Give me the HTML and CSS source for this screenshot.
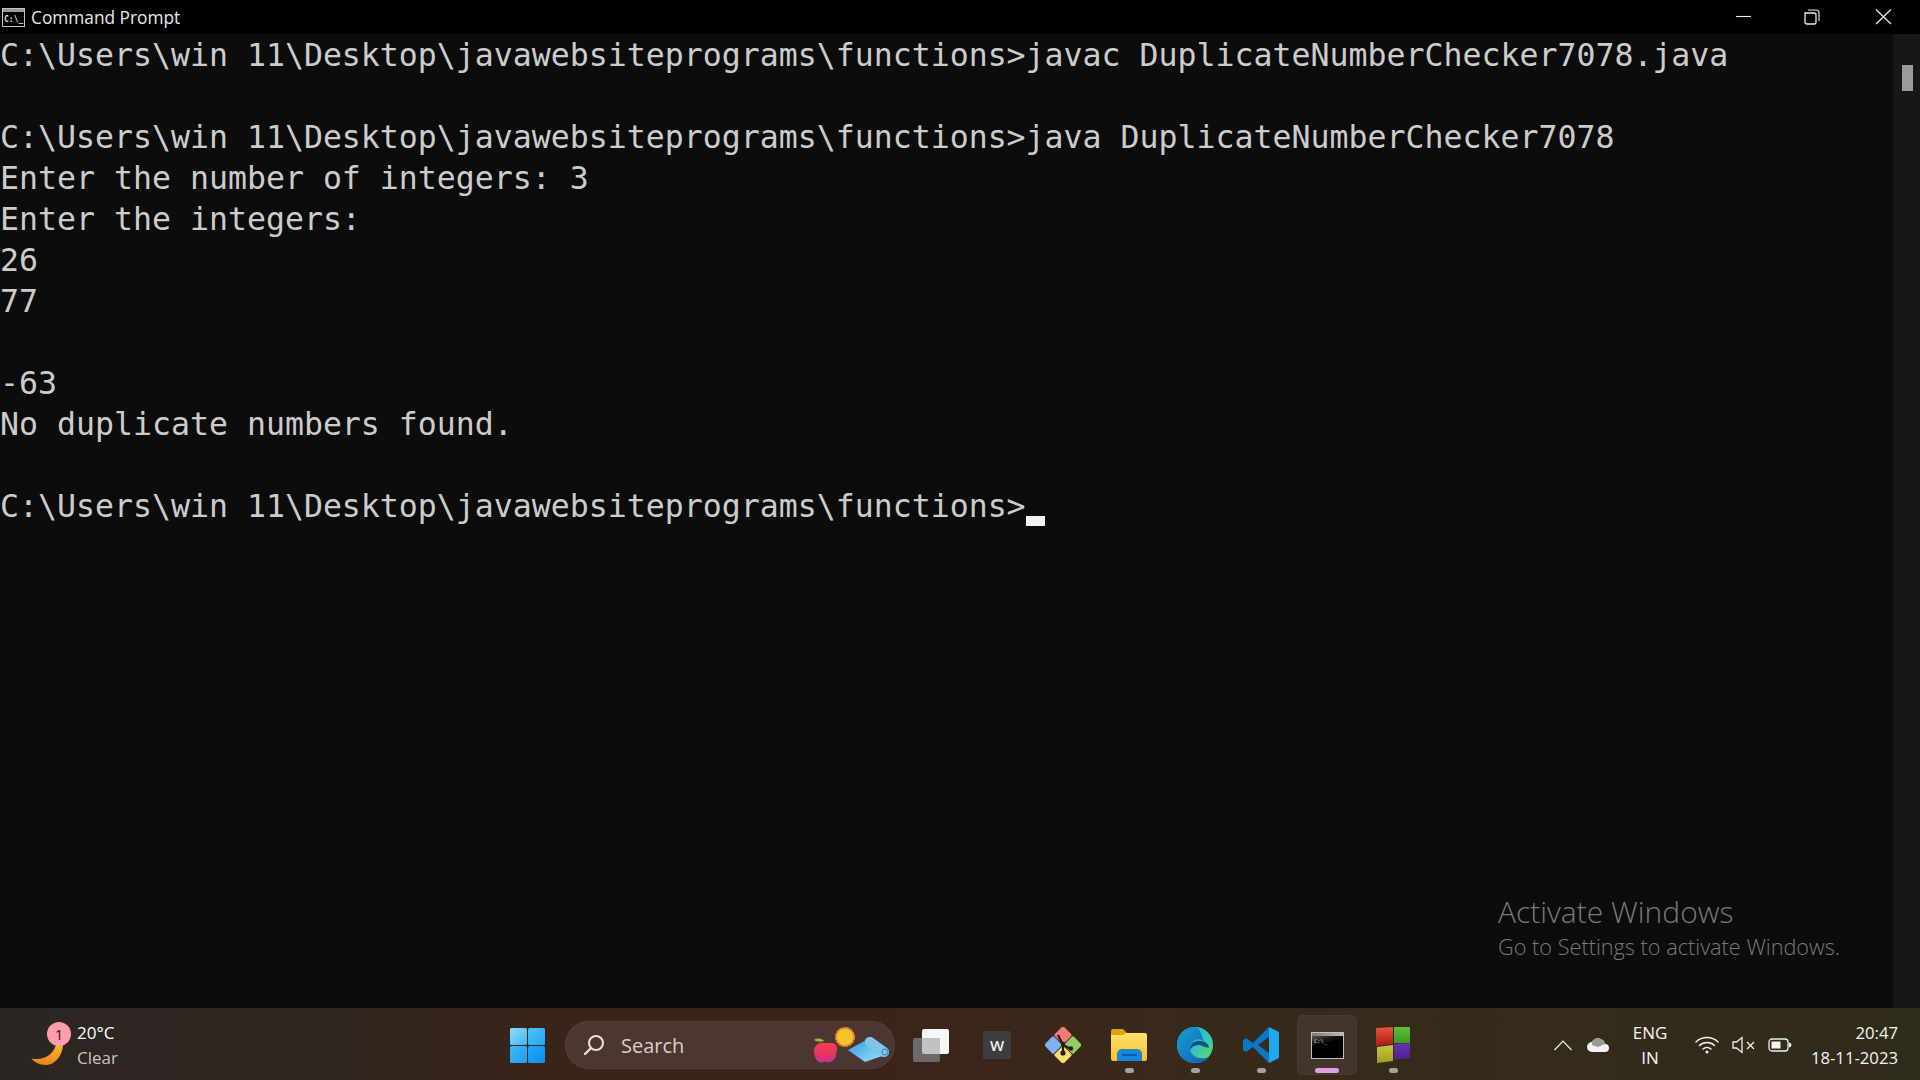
FILE: index.html
```html
<!DOCTYPE html>
<html lang="en">
<head>
<meta charset="utf-8">
<title>Command Prompt</title>
<link rel="stylesheet" href="styles.css">
</head>
<body>
<div class="screen">
  <header class="titlebar">
    <div class="title">
      <svg class="cmd-mini" viewBox="0 0 23 19"><rect x=".5" y=".5" width="22" height="18" fill="#000" stroke="#c4c4c4"/><rect x="1" y="1" width="21" height="3" fill="#9a9a9a"/><text x="2" y="14" class="cmd-mini-text">C:\_</text></svg>
      <span>Command Prompt</span>
    </div>
    <div class="winctl">
      <svg viewBox="0 0 70 34"><path d="M26 16.500h15" stroke="#eee" stroke-width="1.100" fill="none"/></svg>
      <svg viewBox="0 0 70 34"><path d="M25 13h9a2 2 0 0 1 2 2v7a2 2 0 0 1-2 2h-7a2 2 0 0 1-2-2z" stroke="#eee" stroke-width="1.300" fill="none"/><path d="M28 10h8a3 3 0 0 1 3 3v8" stroke="#eee" stroke-width="1.100" fill="none"/></svg>
      <svg viewBox="0 0 70 34"><path d="M26 9.500l15 14.500M41 9.500l-15 14.500" stroke="#eee" stroke-width="1.200" fill="none"/></svg>
    </div>
  </header>

  <main class="console">
    <pre class="output">C:\Users\win 11\Desktop\javawebsiteprograms\functions&gt;javac DuplicateNumberChecker7078.java

C:\Users\win 11\Desktop\javawebsiteprograms\functions&gt;java DuplicateNumberChecker7078
Enter the number of integers: 3
Enter the integers:
26
77

-63
No duplicate numbers found.

C:\Users\win 11\Desktop\javawebsiteprograms\functions&gt;<span class="cursor"></span></pre>
    <aside class="scrollbar"><div class="thumb"></div></aside>
    <div class="watermark">
      <div class="wm-title">Activate Windows</div>
      <div class="wm-sub">Go to Settings to activate Windows.</div>
    </div>
  </main>

  <footer class="taskbar">
    <div class="weather">
      <div class="weather-icon">
        <svg viewBox="0 0 36 44" width="36" height="44">
          <defs><linearGradient id="moon" x1="0" y1="0" x2="0" y2="1"><stop offset="0" stop-color="#f6c33a"/><stop offset="1" stop-color="#f08018"/></linearGradient></defs>
          <path d="M32 18c1 14-8 24-17 24C8 42 3 39 .500 35.500 12 38 24 32 26 18z" fill="url(#moon)"/>
        </svg>
        <span class="badge">1</span>
      </div>
      <div class="weather-text">
        <div class="temp">20°C</div>
        <div class="cond">Clear</div>
      </div>
    </div>

    <div class="center">
      <svg class="start" viewBox="0 0 35 35">
        <defs>
          <linearGradient id="w1" x1="0" y1="0" x2="1" y2="1"><stop offset="0" stop-color="#8fdcff"/><stop offset="1" stop-color="#3fb6f4"/></linearGradient>
          <linearGradient id="w2" x1="0" y1="0" x2="1" y2="1"><stop offset="0" stop-color="#4fc4f8"/><stop offset="1" stop-color="#21a6f2"/></linearGradient>
          <linearGradient id="w3" x1="0" y1="0" x2="1" y2="1"><stop offset="0" stop-color="#3dbcf6"/><stop offset="1" stop-color="#1e9ff0"/></linearGradient>
          <linearGradient id="w4" x1="0" y1="0" x2="1" y2="1"><stop offset="0" stop-color="#1fa6f6"/><stop offset="1" stop-color="#0f8ff0"/></linearGradient>
        </defs>
        <rect x="0" y="0" width="17" height="17" rx="1.500" fill="url(#w1)"/>
        <rect x="18" y="0" width="17" height="17" rx="1.500" fill="url(#w2)"/>
        <rect x="0" y="18" width="17" height="17" rx="1.500" fill="url(#w3)"/>
        <rect x="18" y="18" width="17" height="17" rx="1.500" fill="url(#w4)"/>
      </svg>

      <div class="search">
        <svg class="search-glass" viewBox="0 0 22 22"><circle cx="13" cy="9" r="7" fill="none" stroke="#e6e1dd" stroke-width="2"/><path d="M8 14l-6 6" stroke="#e6e1dd" stroke-width="2.400" stroke-linecap="round"/></svg>
        <span class="search-label">Search</span>
        <svg class="search-art" viewBox="0 0 80 40" width="80" height="40">
          <defs>
            <linearGradient id="apple" x1="0" y1="0" x2="0" y2="1"><stop offset="0" stop-color="#f2424f"/><stop offset=".7" stop-color="#e0306a"/><stop offset="1" stop-color="#b53aa0"/></linearGradient>
            <linearGradient id="mat" x1="0" y1="0" x2="1" y2="1"><stop offset="0" stop-color="#2f9be0"/><stop offset="1" stop-color="#9fe4fa"/></linearGradient>
            <linearGradient id="roll" x1="0" y1="0" x2="1" y2="0"><stop offset="0" stop-color="#a8dcf2"/><stop offset="1" stop-color="#3b9ed6"/></linearGradient>
          </defs>
          <path d="M1 25c0-6 5-9 11-8 3 .5 7-1 10 1 3 2 2 7 1 11-1 5-5 8-9 7-2-.500-3-.500-5 .500C4 37 1 31 1 25z" fill="url(#apple)"/>
          <path d="M1 14c3-2 7-2 10 1-3 1-7 1-10-1z" fill="#8bc33a"/>
          <circle cx="32" cy="11" r="9" fill="#f5c22e" stroke="#ee8a26" stroke-width="2" stroke-dasharray="3 .6"/>
          <path d="M35 24l18-10 19 15-20 7z" fill="url(#mat)"/>
          <path d="M57 16l14 10" stroke="url(#roll)" stroke-width="10" stroke-linecap="round" fill="none"/>
          <path d="M57 16l14 10" stroke="#7cc6ea" stroke-width="10" stroke-linecap="round" fill="none"/>
          <circle cx="72" cy="26" r="3" fill="none" stroke="#2f7fb8" stroke-width="1"/>
        </svg>
      </div>

      <div class="apps">
        <div class="app">
          <svg viewBox="0 0 36 33" class="icon taskview">
            <rect x="9" y="0" width="27" height="25" rx="2" fill="#f6f6f6"/>
            <rect x="0" y="9" width="27" height="24" rx="2" fill="#6a6a6a"/>
            <path d="M9 9h16a2 2 0 0 1 2 2v14H11a2 2 0 0 1-2-2z" fill="#c2c2c2"/>
          </svg>
        </div>
        <div class="app">
          <div class="word">W</div>
        </div>
        <div class="app">
          <svg viewBox="0 0 36 36" class="icon">
            <g transform="rotate(45 18 18)">
              <rect x="4.500" y="4.500" width="13" height="13" rx="1.500" fill="#f47a7a"/>
              <rect x="18.500" y="4.500" width="13" height="13" rx="1.500" fill="#8ed063"/>
              <rect x="4.500" y="18.500" width="13" height="13" rx="1.500" fill="#7fb2f5"/>
              <rect x="18.500" y="18.500" width="13" height="13" rx="1.500" fill="#f7dc6f"/>
            </g>
            <path d="M13 8l5 10 8 4M18 18v9" stroke="#2a1a18" stroke-width="2.200" fill="none"/>
            <circle cx="18" cy="17" r="2.200" fill="#2a1a18"/><circle cx="26" cy="21.500" r="2.200" fill="#2a1a18"/><circle cx="18" cy="26" r="2.600" fill="#2a1a18"/>
          </svg>
        </div>
        <div class="app">
          <svg viewBox="0 0 36 34" class="icon">
            <defs><linearGradient id="fold" x1="0" y1="0" x2="0" y2="1"><stop offset="0" stop-color="#ffe06a"/><stop offset="1" stop-color="#fcbf2c"/></linearGradient></defs>
            <path d="M0 3a2 2 0 0 1 2-2h10l4 4v3H0z" fill="#e0a010"/>
            <path d="M0 7l12 0 3-2h19a2 2 0 0 1 2 2v24a2 2 0 0 1-2 2H2a2 2 0 0 1-2-2z" fill="url(#fold)"/>
            <path d="M6 33V26a5 5 0 0 1 5-5h15a5 5 0 0 1 5 5v7z" fill="#1887d8"/>
            <rect x="11" y="26" width="15" height="2" fill="#0c5da8"/>
          </svg>
          <b class="dot"></b>
        </div>
        <div class="app">
          <svg viewBox="0 0 36 36" class="icon">
            <defs>
              <linearGradient id="edgeA" x1="0" y1="0" x2="1" y2="1"><stop offset="0" stop-color="#1fb3d8"/><stop offset=".6" stop-color="#35c8b0"/><stop offset="1" stop-color="#6fdc5a"/></linearGradient>
              <linearGradient id="edgeB" x1="0" y1="0" x2="1" y2="1"><stop offset="0" stop-color="#1aa0d8"/><stop offset="1" stop-color="#0b5fb0"/></linearGradient>
            </defs>
            <circle cx="18" cy="18" r="18" fill="url(#edgeA)"/>
            <path d="M18 0C7 0 0 8 0 18c0 11 8 18 18 18 6 0 11-2 14-6-7 3-17 1-19-7-1-4 1-8 5-10 3-1.500 7-1 9 2-2-6-4-15-9-15z" fill="url(#edgeB)"/>
            <path d="M13 23c-1-6 5-10 10-9 5 0 9 3 9 7 0 2-2 3-5 3l-1-1c1-2 0-5-4-5-5 0-8 3-9 5z" fill="#0b4f94"/>
            <path d="M36 20c0 2-3 4-8 4-4 0-5-2-4-4 2-1 4 0 4 0 3 1 6 1 8 0z" fill="#47cf7a"/>
          </svg>
          <b class="dot"></b>
        </div>
        <div class="app">
          <svg viewBox="0 0 36 36" class="icon">
            <path d="M26 0L36 5v26l-10 5z" fill="#1fa8f1"/>
            <path d="M26 0L10 16 3 11 0 13v10l3 2 7-5 16 16V26L15 18 26 10z" fill="#0a78c2"/>
          </svg>
          <b class="dot"></b>
        </div>
        <div class="app active">
          <svg viewBox="0 0 33 27" class="icon cmd">
            <defs><linearGradient id="cmdbar" x1="0" y1="0" x2="1" y2="0"><stop offset="0" stop-color="#7a7a7a"/><stop offset="1" stop-color="#b8b8b8"/></linearGradient>
            <linearGradient id="cmdgl" x1="0" y1="0" x2="1" y2="1"><stop offset="0" stop-color="#555"/><stop offset=".45" stop-color="#111"/><stop offset="1" stop-color="#000"/></linearGradient></defs>
            <rect x=".5" y=".5" width="32" height="26" fill="#000" stroke="#c0c0c0"/>
            <path d="M1 4h31v2C24 9 10 10 1 14z" fill="url(#cmdgl)"/>
            <rect x="1" y="1" width="31" height="3" fill="url(#cmdbar)"/>
            <text x="3" y="11" class="cmd-text">C:\_</text>
          </svg>
          <b class="dot-active"></b>
        </div>
        <div class="app">
          <svg viewBox="0 0 36 36" class="icon">
            <defs>
              <linearGradient id="rr" x1="0" y1="0" x2="0" y2="1"><stop offset="0" stop-color="#e8543c"/><stop offset="1" stop-color="#a81c14"/></linearGradient>
              <linearGradient id="rg" x1="0" y1="0" x2="0" y2="1"><stop offset="0" stop-color="#5cc034"/><stop offset="1" stop-color="#3f9a20"/></linearGradient>
              <linearGradient id="ry" x1="0" y1="0" x2="0" y2="1"><stop offset="0" stop-color="#c8c43a"/><stop offset="1" stop-color="#a0a020"/></linearGradient>
              <linearGradient id="rp" x1="0" y1="0" x2="0" y2="1"><stop offset="0" stop-color="#6a32b8"/><stop offset="1" stop-color="#4c2090"/></linearGradient>
            </defs>
            <path d="M1 1l17-1v17l-17 2z" fill="url(#rr)"/>
            <path d="M19 0h16v16H19z" fill="url(#rg)"/>
            <path d="M2 20l16-2v16l-16 2z" fill="url(#ry)"/>
            <path d="M19 17l16-1v15l-16 2z" fill="url(#rp)"/>
          </svg>
          <b class="dot"></b>
        </div>
      </div>
    </div>

    <div class="tray">
      <svg class="tray-ic chev" viewBox="0 0 20 12"><path d="M1.500 11L10 2l8.500 9" fill="none" stroke="#eee" stroke-width="1.200"/></svg>
      <svg class="tray-ic cloud" viewBox="0 0 24 16"><path d="M6 15a5 5 0 0 1 0-10 7 7 0 0 1 13 2 4 4 0 0 1 0 8z" fill="#f2f2f2"/><path d="M6 5a7 7 0 0 1 13 2l-7 3-6-2z" fill="#9a9a94"/></svg>
      <div class="lang"><div>ENG</div><div>IN</div></div>
      <svg class="tray-ic wifi" viewBox="0 0 24 18"><g fill="none" stroke="#f2f2f2" stroke-width="1.500" stroke-linecap="round"><path d="M1 6a16 16 0 0 1 22 0"/><path d="M4.500 9.500a11 11 0 0 1 15 0"/><path d="M8 13a6 6 0 0 1 8 0"/></g><circle cx="12" cy="16" r="1.500" fill="#f2f2f2"/></svg>
      <svg class="tray-ic mute" viewBox="0 0 24 18"><path d="M1 6h3.500L10 1.500v15L4.500 12H1z" fill="none" stroke="#eee" stroke-width="1.300"/><path d="M15 6l7 7M22 6l-7 7" stroke="#eee" stroke-width="1.300"/></svg>
      <svg class="tray-ic batt" viewBox="0 0 24 14"><rect x="1" y="1" width="19" height="12" rx="3" fill="none" stroke="#eee" stroke-width="1.300"/><rect x="3.500" y="3.500" width="9" height="7" fill="#f4f4f4"/><path d="M21 4.500a2.500 2.500 0 0 1 0 5z" fill="#eee"/></svg>
      <div class="clock"><div>20:47</div><div>18-11-2023</div></div>
    </div>
  </footer>
</div>
</body>
</html>
```

FILE: styles.css
```css
* { box-sizing: border-box; }
html, body { margin: 0; padding: 0; height: 100%; background: #0c0c0c; }
.screen {
  width: 1920px; height: 1080px; display: flex; flex-direction: column; overflow: hidden;
  font-family: "Open Sans", "Noto Sans", sans-serif; color: #fff;
}
.titlebar { height: 34px; flex: none; background: #000; display: flex; justify-content: space-between; align-items: center; }
.title { display: flex; align-items: center; gap: 6px; padding-left: 2px; font-size: 17.300px; color: #e8e8e8; }
.title span { font-family: "Open Sans", sans-serif; }
.cmd-mini { width: 23px; height: 19px; display: block; }
.cmd-mini-text { font: 8px "DejaVu Sans Mono", monospace; fill: #ddd; font-weight: 700; }
.winctl { display: flex; }
.winctl svg { width: 70px; height: 34px; display: block; }
.console { flex: 1; position: relative; display: flex; background: #0c0c0c; min-height: 0; }
.output {
  flex: 1; margin: 0; padding: 1px 0 0;
  font-family: "DejaVu Sans Mono", monospace; font-size: 31.550px; line-height: 41px; color: #cccccc;
}
.cursor { display: inline-block; width: 19px; height: 10px; background: #f2f2f2; vertical-align: -9px; }
.scrollbar { width: 27px; flex: none; background: #171717; padding: 31px 7px 0 9px; }
.thumb { width: 11px; height: 26px; background: #9a9a9a; }
.watermark { position: absolute; left: 1498px; top: 860px; color: #7a7a7a; }
.wm-title { font-size: 30px; line-height: 36px; font-weight: 300; }
.wm-sub { font-size: 21.700px; line-height: 33px; font-weight: 300; }
.taskbar {
  height: 72px; flex: none; position: relative; display: flex; align-items: center; padding-top: 2px;
  background: linear-gradient(90deg, #2c2622 0%, #2e2621 15%, #3a2418 30%, #3b2317 42%, #38291a 60%, #352b1a 80%, #2f2b19 100%);
}
.weather { width: 510px; flex: none; display: flex; align-items: center; padding-left: 31px; gap: 6px; }
.weather-icon { position: relative; width: 40px; height: 44px; }
.weather-icon svg { display: block; position: absolute; left: 0; top: 0; }
.badge {
  position: absolute; left: 16px; top: -1px; width: 24px; height: 24px; border-radius: 50%;
  background: #ff9cab; color: #2a1a16; font-size: 15px; line-height: 24px; text-align: center;
}
.weather-text { font-size: 17px; line-height: 25px; }
.temp { color: #fff; }
.cond { color: #c8c4c2; }
.center { display: flex; align-items: center; flex: none; }
.start { width: 35px; height: 35px; display: block; margin-right: 20px; }
.search {
  width: 330px; height: 48px; border-radius: 24px; background: #4b3730; display: flex; align-items: center;
  padding-left: 18px; position: relative; box-shadow: inset 0 0 0 1px #523e37;
}
.search-glass { width: 22px; height: 22px; display: block; }
.search-label { margin-left: 16px; font-size: 20px; color: #d6d0cc; }
.search-art { position: absolute; right: 2px; top: 5px; }
.apps { display: flex; margin-left: 3px; }
.app { width: 66px; height: 60px; display: flex; align-items: center; justify-content: center; position: relative; }
.icon { width: 36px; height: 36px; display: block; }
.taskview { height: 33px; }
.cmd { width: 33px; height: 27px; }
.cmd-text { font: 5.500px "DejaVu Sans Mono", monospace; fill: #ddd; }
.word {
  width: 28px; height: 28px; border-radius: 2px; background: #3d3d40; color: #f0f0f0; text-align: center;
  font-size: 15px; line-height: 28px; font-weight: 600;
}
.dot { position: absolute; left: 29px; bottom: 2px; width: 9px; height: 5px; border-radius: 3px; background: #a8a29e; }
.dot-active { position: absolute; left: 18px; bottom: 2px; width: 24px; height: 5px; border-radius: 3px; background: #e0a0e6; }
.active { background: #42362c; border-radius: 6px; box-shadow: inset 0 0 0 1px #473b31; width: 60px; margin: 0 3px; }
.tray { flex: 1; display: flex; align-items: center; padding-left: 127px; padding-right: 22px; }
.tray-ic { display: block; flex: none; }
.chev { width: 20px; height: 12px; }
.cloud { width: 24px; height: 16px; margin-left: 13px; }
.lang { width: 36px; margin-left: 22px; font-size: 17px; line-height: 25px; text-align: center; color: #f4f4f4; }
.wifi { width: 24px; height: 18px; margin-left: 27px; }
.mute { width: 24px; height: 18px; margin-left: 13px; }
.batt { width: 24px; height: 14px; margin-left: 12px; }
.clock { margin-left: auto; font-size: 16.700px; line-height: 25px; text-align: right; color: #f4f4f4; }
```
